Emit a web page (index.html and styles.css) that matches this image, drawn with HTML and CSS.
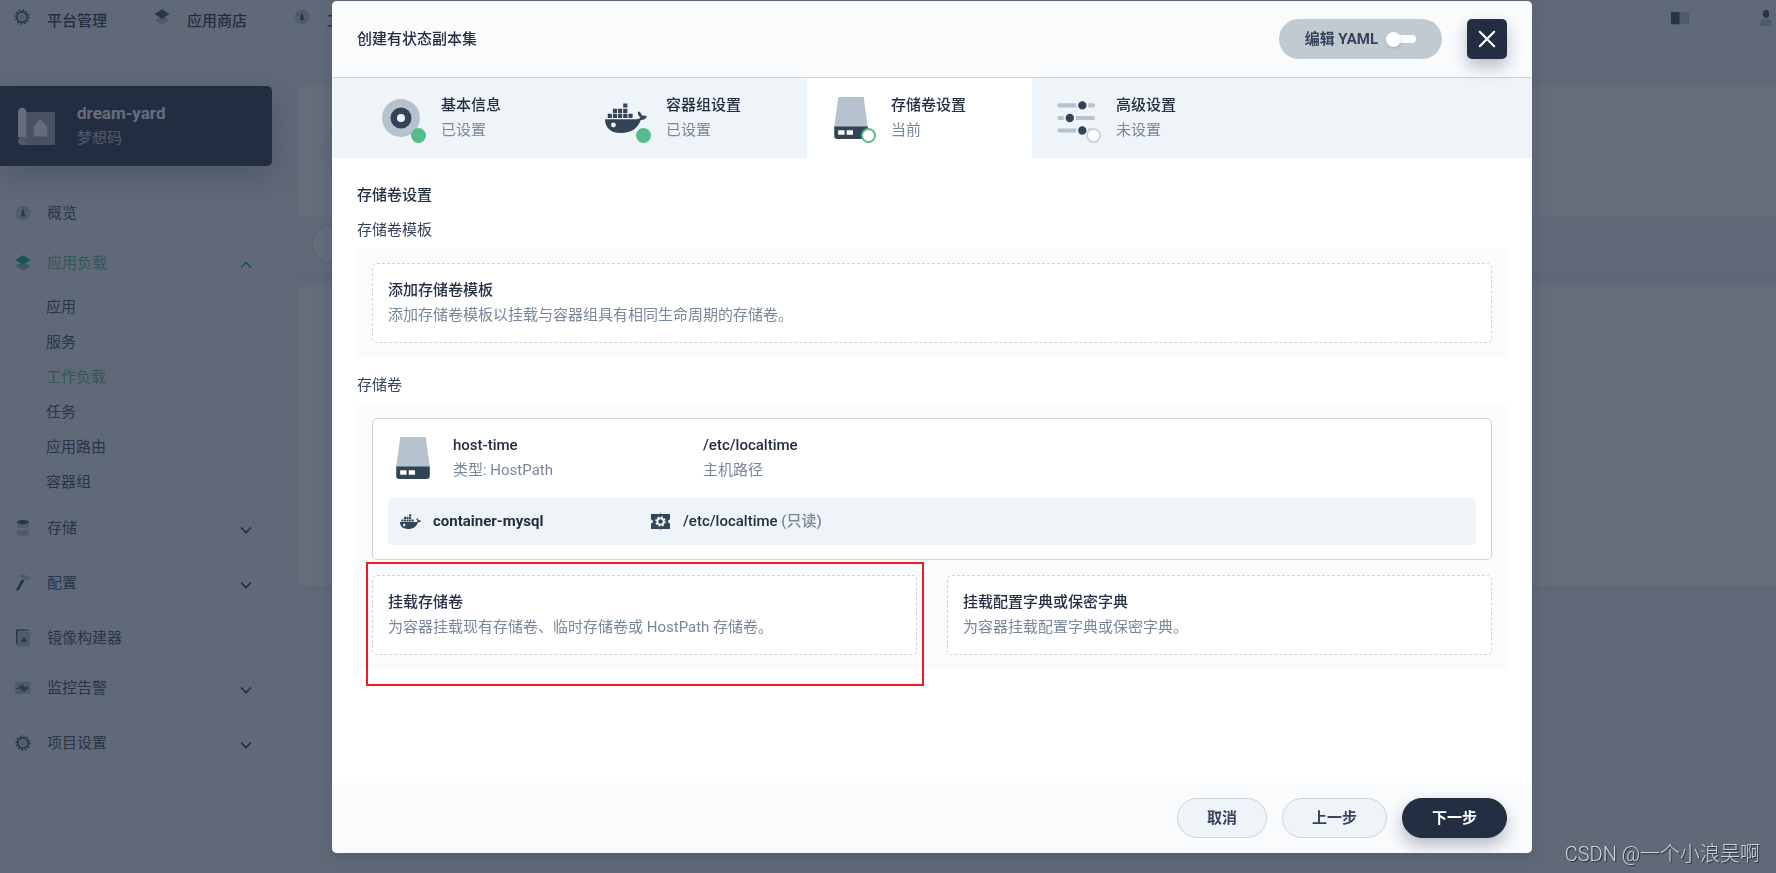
FILE: index.html
```html
<!DOCTYPE html>
<html lang="zh-CN">
<head>
<meta charset="utf-8">
<title>创建有状态副本集</title>
<link rel="stylesheet" href="styles.css">
</head>
<body>
<svg class="sprite" aria-hidden="true">
  <symbol id="i-gear" viewBox="0 0 20 20">
    <circle class="lt" cx="10" cy="10" r="3"/>
    <circle class="ring" cx="10" cy="10" r="5.200"/>
    <circle class="teeth" cx="10" cy="10" r="6.800"/>
  </symbol>
  <symbol id="i-layers" viewBox="0 0 20 20">
    <path class="lt" d="M2.5 13 10 8.500l7.500 4.500-7.500 4.500z"/>
    <path class="dk" d="M2.500 7 10 2.300 17.500 7 10 11.700z"/>
  </symbol>
  <symbol id="i-dash" viewBox="0 0 20 20">
    <circle class="lt" cx="10" cy="10" r="7.300"/>
    <path class="cut" d="M3.500 10.500h13"/>
    <path class="dk" d="M10 5.500l1.800 5.500a1.900 1.900 0 1 1-3.600 0z"/>
  </symbol>
  <symbol id="i-db" viewBox="0 0 20 20">
    <path class="lt" d="M4 4v4.500c0 2.200 12 2.200 12 0V4zM4 11v5c0 2.400 12 2.400 12 0v-5c-2 1.700-10 1.700-12 0z"/>
    <ellipse class="dk" cx="10" cy="4" rx="6" ry="2"/>
  </symbol>
  <symbol id="i-hammer" viewBox="0 0 20 20">
    <path class="lt" d="M4 2.800C8 .8 12 1 14.500 3.200l2.800 1-.8 3.600-2.300-1.400-2 .8-3-1.600C8.500 3.800 6.500 3.300 4 2.800z"/>
    <path class="dk" d="M8.800 6.200l2.600 1.300L6 17.300l-2.800.2.200-1.500z"/>
  </symbol>
  <symbol id="i-image" viewBox="0 0 20 20">
    <path class="lt" d="M5 3.500h12v15H5z"/>
    <path class="dk" d="M3 1.500h12.500v1.300H4.500V17L3 15.500zM11 9l3.200 5H7.800z"/>
  </symbol>
  <symbol id="i-monitor" viewBox="0 0 20 20">
    <rect class="lt" x="2" y="4" width="16" height="12" rx="1"/>
    <path class="line" d="M3.500 10.500h2l1.500-2 1.500 3L9.500 6l1.500 8 1.500-5 1 2.500 1-2 1 .7"/>
  </symbol>
  <symbol id="i-book" viewBox="0 0 20 20">
    <path class="dk" d="M1 4h7.500l1.200.8V17l-1.200-.8H1z"/>
    <path class="lt" d="M19 4h-7.500l-1.500.8V17l1.500-.8H19z"/>
  </symbol>
  <symbol id="i-user" viewBox="0 0 20 20">
    <rect class="dk" x="7" y="2" width="6" height="8" rx="3"/>
    <path class="lt" d="M4 18v-2.500C4 12.500 6 11 8 11h4c2 0 4 1.500 4 4.500V18z"/>
  </symbol>
  <symbol id="i-disc" viewBox="0 0 50 50">
    <circle class="lt" cx="25" cy="25" r="19"/>
    <circle class="dk" cx="25" cy="25" r="10.500"/>
    <circle class="hole" cx="25" cy="25" r="4"/>
  </symbol>
  <symbol id="i-docker" viewBox="0 0 50 50">
    <path class="dk" d="M4 26.200h31.500c2 0 3.500-.8 4-2-2.500-1.500-3.200-3.700-2-6 2 1 3.200 2.700 3.400 4.600 1.800-.5 3.600-.3 5.100.7-1 2.500-3.200 3.500-6.200 3.400C37 34.500 31 40 19.500 40 9 40 4 34 4 26.200z"/>
    <path class="dk" d="M6.700 20.800h4.200V25H6.700zM11.900 20.800h4.200V25h-4.200zM17 20.800h4.200V25H17zM22.200 20.800h4.200V25h-4.200zM27.400 20.800h4.200V25h-4.200zM11.900 15.700h4.200v4.200h-4.200zM17 15.700h4.200v4.200H17zM22.200 15.700h4.200v4.200h-4.200zM22.200 10.400h4.200v4.200h-4.200z"/>
    <circle class="hole" cx="12.400" cy="32" r="2.400"/>
  </symbol>
  <symbol id="i-storage" viewBox="0 0 50 50">
    <path class="lt" d="M12.300 4h25.400l4.100 30H8.200z"/>
    <path class="dk" d="M8.200 33.500h33.600V43a3 3 0 0 1-3 3H11.200a3 3 0 0 1-3-3z"/>
    <path class="white" d="M12.200 37.300h6.300v4.500h-6.300zM20.700 37.300H27v4.500h-6.300z"/>
  </symbol>
  <symbol id="i-sliders" viewBox="0 0 50 50">
    <path class="bar" d="M8.500 12.400h33.500M8.500 25h33.500M8.500 37.500h33.500"/>
    <circle class="knob" cx="31.300" cy="12.400" r="5.200"/>
    <circle class="knob" cx="18.800" cy="25" r="5.200"/>
    <circle class="knob" cx="31.300" cy="37.500" r="5.200"/>
  </symbol>
  <symbol id="i-mount" viewBox="0 0 25 25">
    <path class="lt" d="M10.500 5.500l2-2.500 2 2.500zM10.500 19.500l2 2.500 2-2.500z"/>
    <path class="dk" d="M3 5h19v5.500a2 2 0 0 0 0 4V20H3v-5.500a2 2 0 0 0 0-4z"/>
    <circle class="m-ring" cx="12.500" cy="12.500" r="3.200"/>
    <circle class="m-teeth" cx="12.500" cy="12.500" r="4.600"/>
  </symbol>
  <symbol id="i-project" viewBox="0 0 40 40">
    <path class="p-sheet" d="M9 5h29v34H5v-6z"/>
    <path class="p-house" d="M16 20l7-7.500 7 7.500v10.300H16z"/>
    <path class="p-roll" d="M0 5a4.300 4.300 0 0 1 8.600 0v26H0z"/>
    <path class="p-end" d="M0 34.500a4.300 4.300 0 0 1 8.600 0V39H4.300A4.300 4.300 0 0 1 0 34.500z"/>
  </symbol>
  <symbol id="i-chevron" viewBox="0 0 14 14">
    <path class="chev" d="M2 4.500l5 5 5-5"/>
  </symbol>
</svg>

<div class="app">
  <header class="topbar">
    <nav class="topnav">
      <a href="#"><svg class="ic"><use href="#i-gear"/></svg>平台管理</a>
      <a href="#"><svg class="ic"><use href="#i-layers"/></svg>应用商店</a>
      <a href="#"><svg class="ic"><use href="#i-dash"/></svg>工作台</a>
    </nav>
    <div class="toptools">
      <button type="button" aria-label="文档"><svg class="ic"><use href="#i-book"/></svg></button>
      <button type="button" aria-label="用户"><svg class="ic"><use href="#i-user"/></svg></button>
    </div>
  </header>
  <div class="layout">
    <aside class="sidebar">
      <div class="project">
        <svg class="project-icon"><use href="#i-project"/></svg>
        <div><strong>dream-yard</strong><span>梦想码</span></div>
      </div>
      <ul class="menu">
        <li><a href="#"><svg class="ic"><use href="#i-dash"/></svg>概览</a></li>
        <li class="open">
          <a href="#"><svg class="ic"><use href="#i-layers"/></svg>应用负载<svg class="arrow up"><use href="#i-chevron"/></svg></a>
          <ul class="submenu">
            <li><a href="#">应用</a></li>
            <li><a href="#">服务</a></li>
            <li><a class="current" href="#">工作负载</a></li>
            <li><a href="#">任务</a></li>
            <li><a href="#">应用路由</a></li>
            <li><a href="#">容器组</a></li>
          </ul>
        </li>
        <li class="group"><a href="#"><svg class="ic"><use href="#i-db"/></svg>存储<svg class="arrow"><use href="#i-chevron"/></svg></a></li>
        <li class="group"><a href="#"><svg class="ic"><use href="#i-hammer"/></svg>配置<svg class="arrow"><use href="#i-chevron"/></svg></a></li>
        <li><a href="#"><svg class="ic"><use href="#i-image"/></svg>镜像构建器</a></li>
        <li class="group"><a href="#"><svg class="ic"><use href="#i-monitor"/></svg>监控告警<svg class="arrow"><use href="#i-chevron"/></svg></a></li>
        <li class="group"><a href="#"><svg class="ic"><use href="#i-gear"/></svg>项目设置<svg class="arrow"><use href="#i-chevron"/></svg></a></li>
      </ul>
    </aside>
    <main class="content">
      <section class="banner">
        <div class="banner-head"><span class="banner-icon"></span></div>
        <div class="banner-tools"><span class="banner-pill"></span></div>
      </section>
      <section class="listing"></section>
    </main>
  </div>
</div>

<div class="mask">
  <form class="modal" role="dialog" aria-labelledby="modal-title">
    <header class="modal-head">
      <h1 id="modal-title">创建有状态副本集</h1>
      <label class="yaml" for="yaml">编辑 YAML<input id="yaml" type="checkbox" role="switch"></label>
      <button class="close" type="button" aria-label="关闭"><svg viewBox="0 0 20 20"><path d="M2 2l16 16M18 2L2 18"/></svg></button>
    </header>
    <ol class="steps">
      <li class="step">
        <span class="step-icon"><svg><use href="#i-disc"/></svg><i class="dot done"></i></span>
        <div class="pair"><strong>基本信息</strong><span>已设置</span></div>
      </li>
      <li class="step">
        <span class="step-icon"><svg><use href="#i-docker"/></svg><i class="dot done"></i></span>
        <div class="pair"><strong>容器组设置</strong><span>已设置</span></div>
      </li>
      <li class="step active">
        <span class="step-icon"><svg><use href="#i-storage"/></svg><i class="dot now"></i></span>
        <div class="pair"><strong>存储卷设置</strong><span>当前</span></div>
      </li>
      <li class="step">
        <span class="step-icon"><svg><use href="#i-sliders"/></svg><i class="dot"></i></span>
        <div class="pair"><strong>高级设置</strong><span>未设置</span></div>
      </li>
    </ol>
    <div class="modal-body">
      <h2>存储卷设置</h2>
      <section class="field">
        <h3>存储卷模板</h3>
        <div class="panel">
          <button type="button" class="add pair"><strong>添加存储卷模板</strong><span>添加存储卷模板以挂载与容器组具有相同生命周期的存储卷。</span></button>
        </div>
      </section>
      <section class="field">
        <h3>存储卷</h3>
        <div class="panel">
          <article class="volume">
            <div class="volume-row">
              <svg class="volume-icon"><use href="#i-storage"/></svg>
              <div class="pair volume-cell"><strong>host-time</strong><span>类型: HostPath</span></div>
              <div class="pair volume-cell"><strong>/etc/localtime</strong><span>主机路径</span></div>
            </div>
            <div class="mounts">
              <div class="mount"><svg><use href="#i-docker"/></svg><strong class="container-name">container-mysql</strong></div>
              <div class="mount"><svg><use href="#i-mount"/></svg><strong>/etc/localtime <em>(只读)</em></strong></div>
            </div>
          </article>
          <div class="adders">
            <div class="marked">
              <button type="button" class="add pair"><strong>挂载存储卷</strong><span>为容器挂载现有存储卷、临时存储卷或 HostPath 存储卷。</span></button>
            </div>
            <button type="button" class="add pair"><strong>挂载配置字典或保密字典</strong><span>为容器挂载配置字典或保密字典。</span></button>
          </div>
        </div>
      </section>
    </div>
    <footer class="modal-foot">
      <button type="button" class="btn">取消</button>
      <button type="button" class="btn">上一步</button>
      <button type="button" class="btn primary">下一步</button>
    </footer>
  </form>
</div>
<div class="watermark">CSDN @一个小浪吴啊</div>
</body>
</html>
```

FILE: styles.css
```css
:root {
  --ink: #242e42;
  --text: #36435c;
  --muted: #79879c;
  --pale: #eff4f9;
  --paler: #f9fbfd;
  --line: #ccd3db;
  --green: #55bc8a;
  --icon-dark: #324558;
  --icon-light: #b6c2cd;
}

* { box-sizing: border-box; }

body {
  margin: 0;
  height: 100vh;
  overflow: hidden;
  background: var(--pale);
  color: var(--text);
  font: 400 15px/25px Roboto, "Noto Sans CJK SC", sans-serif;
}

h1, h2, h3, ul, ol { margin: 0; padding: 0; font-size: 15px; }
ul, ol { list-style: none; }
a { color: inherit; text-decoration: none; }
button { font: inherit; color: inherit; border: 0; background: none; padding: 0; cursor: pointer; }
svg { display: block; flex: none; }
strong { font-weight: 500; }

.sprite { position: absolute; width: 0; height: 0; }

/* icon parts */
.dk { fill: var(--icon-dark); }
.lt { fill: var(--icon-light); }
.white { fill: #fff; }
.hole { fill: var(--pale); }
.cut { stroke: var(--pale); stroke-width: 1; }
.ring { fill: none; stroke: var(--icon-dark); stroke-width: 1.7; }
.teeth { fill: none; stroke: var(--icon-dark); stroke-width: 1.8; stroke-dasharray: 1.6 1.96; }
.line { fill: none; stroke: var(--icon-dark); stroke-width: 1.2; }
.bar { stroke: var(--icon-light); stroke-width: 4.2; stroke-linecap: round; }
.knob { fill: var(--icon-dark); stroke: var(--pale); stroke-width: 2; }
.m-ring { fill: none; stroke: #fff; stroke-width: 1.8; }
.m-teeth { fill: none; stroke: #fff; stroke-width: 1.4; stroke-dasharray: 1.8 1.81; }
.p-sheet { fill: #9ca3b0; }
.p-house, .p-roll { fill: #fff; }
.p-end { fill: #b4bac4; }
.chev { fill: none; stroke: var(--ink); stroke-width: 1.6; }

/* page behind the dialog */
.topbar {
  display: flex;
  justify-content: space-between;
  height: 60px;
  padding: 6px 0 0 12px;
  border-bottom: 1px solid #e8edf3;
}
.topnav { display: flex; gap: 45px; font-weight: 500; color: var(--ink); }
.topnav a { display: flex; gap: 15px; height: 30px; line-height: 30px; }
.ic { width: 20px; height: 20px; margin-top: 1px; }
.toptools { display: flex; gap: 66px; }
.toptools button { height: 22px; }

.layout { display: flex; gap: 25px; padding-top: 26px; }
.sidebar { width: 272px; flex: none; }
.project {
  display: flex;
  align-items: center;
  gap: 20px;
  height: 80px;
  padding-left: 18px;
  border-radius: 0 5px 5px 0;
  background: var(--ink);
  box-shadow: 0 10px 30px rgba(36, 46, 66, .3);
}
.project-icon { width: 39px; height: 39px; }
.project strong, .project span { display: block; color: #fff; }
.project strong { font-size: 17px; font-weight: 700; }
.project span { opacity: .7; }

.menu { padding-top: 27px; }
.menu > li { margin-bottom: 10px; }
.menu > .group { margin-bottom: 15px; }
.menu > .open { margin-bottom: 8px; }
.menu > li > a { display: flex; align-items: center; gap: 14px; height: 40px; padding: 0 19px 0 13px; }
.menu .ic { margin-top: 0; }
.arrow { width: 14px; height: 14px; margin: 4px 0 0 auto; }
.up { transform: rotate(180deg); }
.open > a { color: var(--green); --icon-dark: #00aa72; --icon-light: #7eb8a8; --ink: #00aa72; }
.submenu { padding: 7px 0 0 46px; }
.submenu a { display: block; height: 35px; line-height: 35px; }
.submenu .current { color: var(--green); }

.content { flex: 1; display: grid; gap: 15px; align-content: start; }
.banner, .listing { border-radius: 5px 0 0 5px; background: #fff; box-shadow: 0 4px 8px rgba(36, 46, 66, .06); overflow: hidden; }
.banner-head { display: flex; align-items: center; height: 130px; padding-left: 25px; }
.banner-icon { width: 60px; height: 60px; border-radius: 30px; background: var(--pale); }
.banner-tools { height: 55px; padding: 8px 15px; background: var(--pale); }
.banner-pill { display: block; width: 70%; height: 40px; border: 1px solid var(--line); border-radius: 20px; background: #fff; }
.listing { height: 300px; }

/* dialog */
.mask {
  position: fixed;
  inset: 0;
  display: flex;
  padding: 1px 244px 20px 332px;
  background: rgba(36, 46, 66, .7);
}
.modal {
  flex: 1;
  display: flex;
  flex-direction: column;
  border-radius: 5px;
  background: #fff;
  box-shadow: 0 4px 16px rgba(36, 46, 66, .2);
  overflow: hidden;
}
.modal-head {
  display: flex;
  align-items: center;
  gap: 25px;
  height: 77px;
  padding: 0 25px;
  border-bottom: 1px solid var(--line);
  background: var(--paler);
}
.modal-head h1 { margin-right: auto; color: var(--ink); font-weight: 500; }
.yaml {
  display: flex;
  align-items: center;
  gap: 8px;
  height: 40px;
  padding: 0 26px;
  border-radius: 20px;
  background: #c1c9d1;
  font-weight: 700;
}
.yaml input {
  appearance: none;
  display: flex;
  align-items: center;
  width: 30px;
  height: 8px;
  margin: 0;
  border-radius: 4px;
  background: #fff;
}
.yaml input::before {
  content: "";
  width: 15px;
  height: 15px;
  border-radius: 8px;
  background: #fff;
  box-shadow: 0 1px 3px rgba(36, 46, 66, .2);
}
.close {
  display: grid;
  place-items: center;
  width: 40px;
  height: 40px;
  border-radius: 5px;
  background: var(--ink);
  box-shadow: 0 8px 16px rgba(36, 46, 66, .3);
  z-index: 1;
}
.close svg { width: 18px; height: 18px; fill: none; stroke: #fff; stroke-width: 2.4; stroke-linecap: round; }

.steps { display: flex; padding: 0 25px; background: var(--pale); }
.step { display: flex; align-items: center; gap: 15px; width: 225px; height: 80px; padding-left: 19px; }
.step.active { background: #fff; }
.step-icon { position: relative; }
.step-icon svg, .volume-icon { width: 50px; height: 50px; }
.dot {
  position: absolute;
  right: 0;
  bottom: 0;
  width: 15px;
  height: 15px;
  border: 2px solid var(--line);
  border-radius: 8px;
  background: #fff;
}
.dot.done { border-color: var(--green); background: var(--green); }
.dot.now { border-color: var(--green); }

.pair strong, .pair span { display: block; }
.pair strong { color: var(--ink); }
.pair span { color: var(--muted); }

.modal-body { flex: 1; padding: 25px; }
.modal-body h2 { margin-bottom: 10px; color: var(--ink); font-weight: 500; }
.field { margin-bottom: 15px; }
.field h3 { margin-bottom: 5px; font-weight: 400; }
.panel { display: grid; gap: 15px; padding: 15px; border-radius: 5px; background: var(--paler); }
.add {
  width: 100%;
  height: 80px;
  padding: 0 15px;
  border: 1px dashed var(--line);
  border-radius: 5px;
  background: #fff;
  text-align: left;
}
.volume { padding: 14px 15px; border: 1px solid var(--line); border-radius: 5px; background: #fff; }
.volume-row { display: flex; align-items: center; margin-bottom: 15px; }
.volume-icon { margin-right: 15px; }
.volume-cell { width: 250px; }
.mounts { display: flex; height: 47px; padding: 0 10px; border-radius: 5px; background: var(--pale); }
.mount { display: flex; align-items: center; gap: 10px; width: 250px; }
.mount svg { width: 25px; height: 25px; }
.mount strong { color: var(--ink); }
.mount .container-name { font-weight: 700; }
.mount em { color: var(--muted); font-style: normal; }
.adders { display: grid; grid-template-columns: 1fr 1fr; gap: 30px; }
.marked { position: relative; }
.marked::after {
  content: "";
  position: absolute;
  inset: -13px -7px -31px -6px;
  border: 2px solid #ed1c24;
  pointer-events: none;
}

.modal-foot { display: flex; justify-content: flex-end; gap: 15px; padding: 15px 25px; background: var(--paler); }
.btn {
  height: 40px;
  padding: 0 29px;
  border: 1px solid var(--line);
  border-radius: 20px;
  background: var(--pale);
  font-weight: 700;
}
.btn.primary { border-color: var(--ink); background: var(--ink); color: #fff; box-shadow: 0 8px 16px rgba(36, 46, 66, .3); }

.watermark {
  position: fixed;
  right: 16px;
  bottom: 4px;
  color: #d0d3d8;
  font: 400 20px/30px "Liberation Sans Narrow", Roboto, "Noto Sans CJK SC", sans-serif;
  font-weight: 300;
  text-shadow: 1px 1px 1px rgba(0, 0, 0, .6);
}
```
